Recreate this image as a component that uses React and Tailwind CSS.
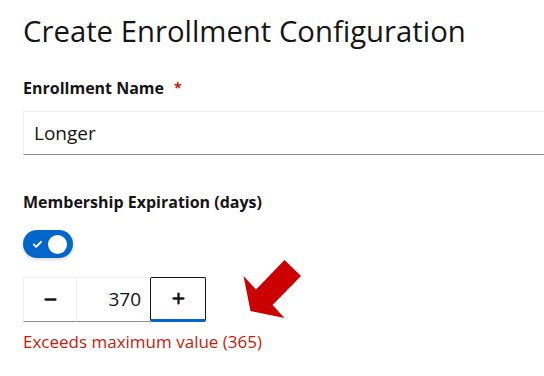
import { Check, Minus, Plus } from "lucide-react";

export default function App() {
  return (
    <div
      className="relative h-[376px] w-[544px] overflow-hidden bg-white pl-[23px] text-[#151515]"
      style={{ fontFamily: '"Open Sans", "Liberation Sans", sans-serif' }}
    >
      <h1 className="pt-[12px] text-[29.3px] leading-[38px] font-normal">Create Enrollment Configuration</h1>

      <div className="mt-[27px] flex items-center gap-[10px] text-[16px] leading-[22px] font-bold">
        Enrollment Name
        <span className="text-[14px] text-[#c9190b]">*</span>
      </div>
      <div className="mt-[12px] flex h-[44px] w-[600px] items-center border border-[#f0f0f0] border-b-[#8a8d90] pl-[10px] text-[19px]">
        Longer
      </div>

      <div className="mt-[36px] text-[16px] leading-[22px] font-bold">Membership Expiration (days)</div>

      <div className="mt-[17px] flex h-[28px] w-[50px] items-center justify-between rounded-full bg-[#0066cc] pl-[9px] pr-[6px] shadow-[0_2px_4px_rgba(0,0,0,0.15)]">
        <Check size={11} strokeWidth={4} className="text-white" />
        <span className="h-[19px] w-[19px] rounded-full bg-white" />
      </div>

      <div className="mt-[19px] flex h-[45px]">
        <button className="flex w-[54px] items-center justify-center border border-[#f0f0f0] border-b-[#8a8d90]">
          <Minus size={17} strokeWidth={3.2} />
        </button>
        <div className="flex w-[73px] items-center justify-end border-y border-[#f0f0f0] border-b-[#8a8d90] pr-[9px] text-[19px]">
          370
        </div>
        <button className="flex w-[56px] items-center justify-center rounded-[2px] border border-[#151515] border-b-[3px] border-b-[#0066cc]">
          <Plus size={17} strokeWidth={3.2} />
        </button>
      </div>

      <div className="mt-[8px] text-[17px] leading-[24px] text-[#c9190b]">Exceeds maximum value (365)</div>

      <svg className="absolute left-0 top-0" width="544" height="376" viewBox="0 0 544 376">
        <polygon
          points="250.5,311 243.5,276 256,289.5 284.5,260 301,276 272.5,305 284.5,318"
          fill="#cc0000"
        />
      </svg>
    </div>
  );
}
